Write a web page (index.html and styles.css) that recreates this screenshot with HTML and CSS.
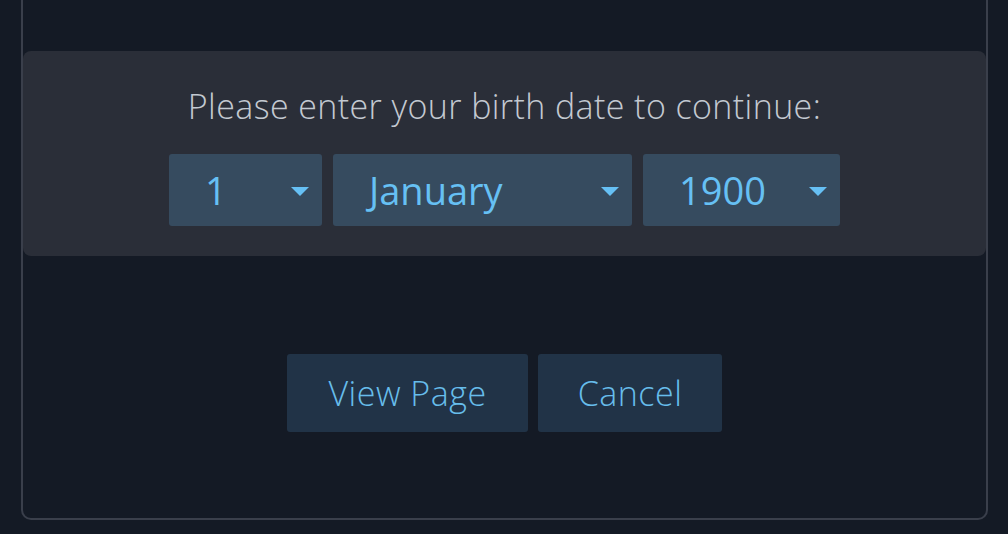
FILE: index.html
```html
<!DOCTYPE html>
<html lang="en">
<head>
    <meta charset="UTF-8">
    <meta name="viewport" content="width=device-width, initial-scale=1.0">
    <title>Age Check</title>
    <link rel="stylesheet" href="styles.css">
</head>
<body>
    <div class="agegate">
        <div class="agegate-panel">
            <p class="agegate-prompt">Please enter your birth date to continue:</p>
            <div class="date-row">
                <div class="date-select day">
                    <span>1</span>
                    <svg class="caret" viewBox="0 0 18 9" width="18" height="9"><path d="M0 0 H18 L9 9 Z"/></svg>
                </div>
                <div class="date-select month">
                    <span>January</span>
                    <svg class="caret" viewBox="0 0 18 9" width="18" height="9"><path d="M0 0 H18 L9 9 Z"/></svg>
                </div>
                <div class="date-select year">
                    <span>1900</span>
                    <svg class="caret" viewBox="0 0 18 9" width="18" height="9"><path d="M0 0 H18 L9 9 Z"/></svg>
                </div>
            </div>
        </div>
        <div class="agegate-actions">
            <button type="button" class="btn view">View Page</button>
            <button type="button" class="btn cancel">Cancel</button>
        </div>
    </div>
</body>
</html>
```

FILE: styles.css
```css
body {
    margin: 0;
    background: #141a25;
    font-family: "Open Sans", Lato, sans-serif;
}
.agegate {
    margin: 0 20px 0 21px;
    height: 520px;
    border: 2px solid #3a3f4b;
    border-top: none;
    border-radius: 0 0 10px 10px;
    padding-top: 51px;
    box-sizing: border-box;
}
.agegate-panel {
    background: #2a2e38;
    border-radius: 8px;
    height: 205px;
    box-sizing: border-box;
    padding-top: 34px;
}
.agegate-prompt {
    margin: 0;
    text-align: center;
    color: #c3c9d1;
    font-size: 34px;
    font-weight: 300;
    letter-spacing: 0.4px;
    line-height: 42px;
}
.date-row {
    display: flex;
    justify-content: center;
    gap: 11px;
    margin-top: 27px;
}
.date-select {
    height: 72px;
    background: #364b5f;
    border-radius: 3px;
    display: flex;
    align-items: center;
    justify-content: space-between;
    padding: 0 13px 0 36px;
    box-sizing: border-box;
    color: #66c0f4;
    font-size: 38px;
}
.date-select.day {
    width: 153px;
}
.date-select.month {
    width: 299px;
}
.date-select.year {
    width: 197px;
}
.caret {
    fill: #66c0f4;
    margin-top: 2px;
}
.agegate-actions {
    display: flex;
    justify-content: center;
    gap: 10px;
    margin-top: 98px;
}
.btn {
    height: 78px;
    background: #213347;
    border: none;
    border-radius: 3px;
    color: #67bdeb;
    font-family: "Open Sans", Lato, sans-serif;
    font-size: 34px;
    font-weight: 300;
    letter-spacing: 0.5px;
    padding: 0;
}
.btn.view {
    width: 241px;
}
.btn.cancel {
    width: 184px;
}
```
